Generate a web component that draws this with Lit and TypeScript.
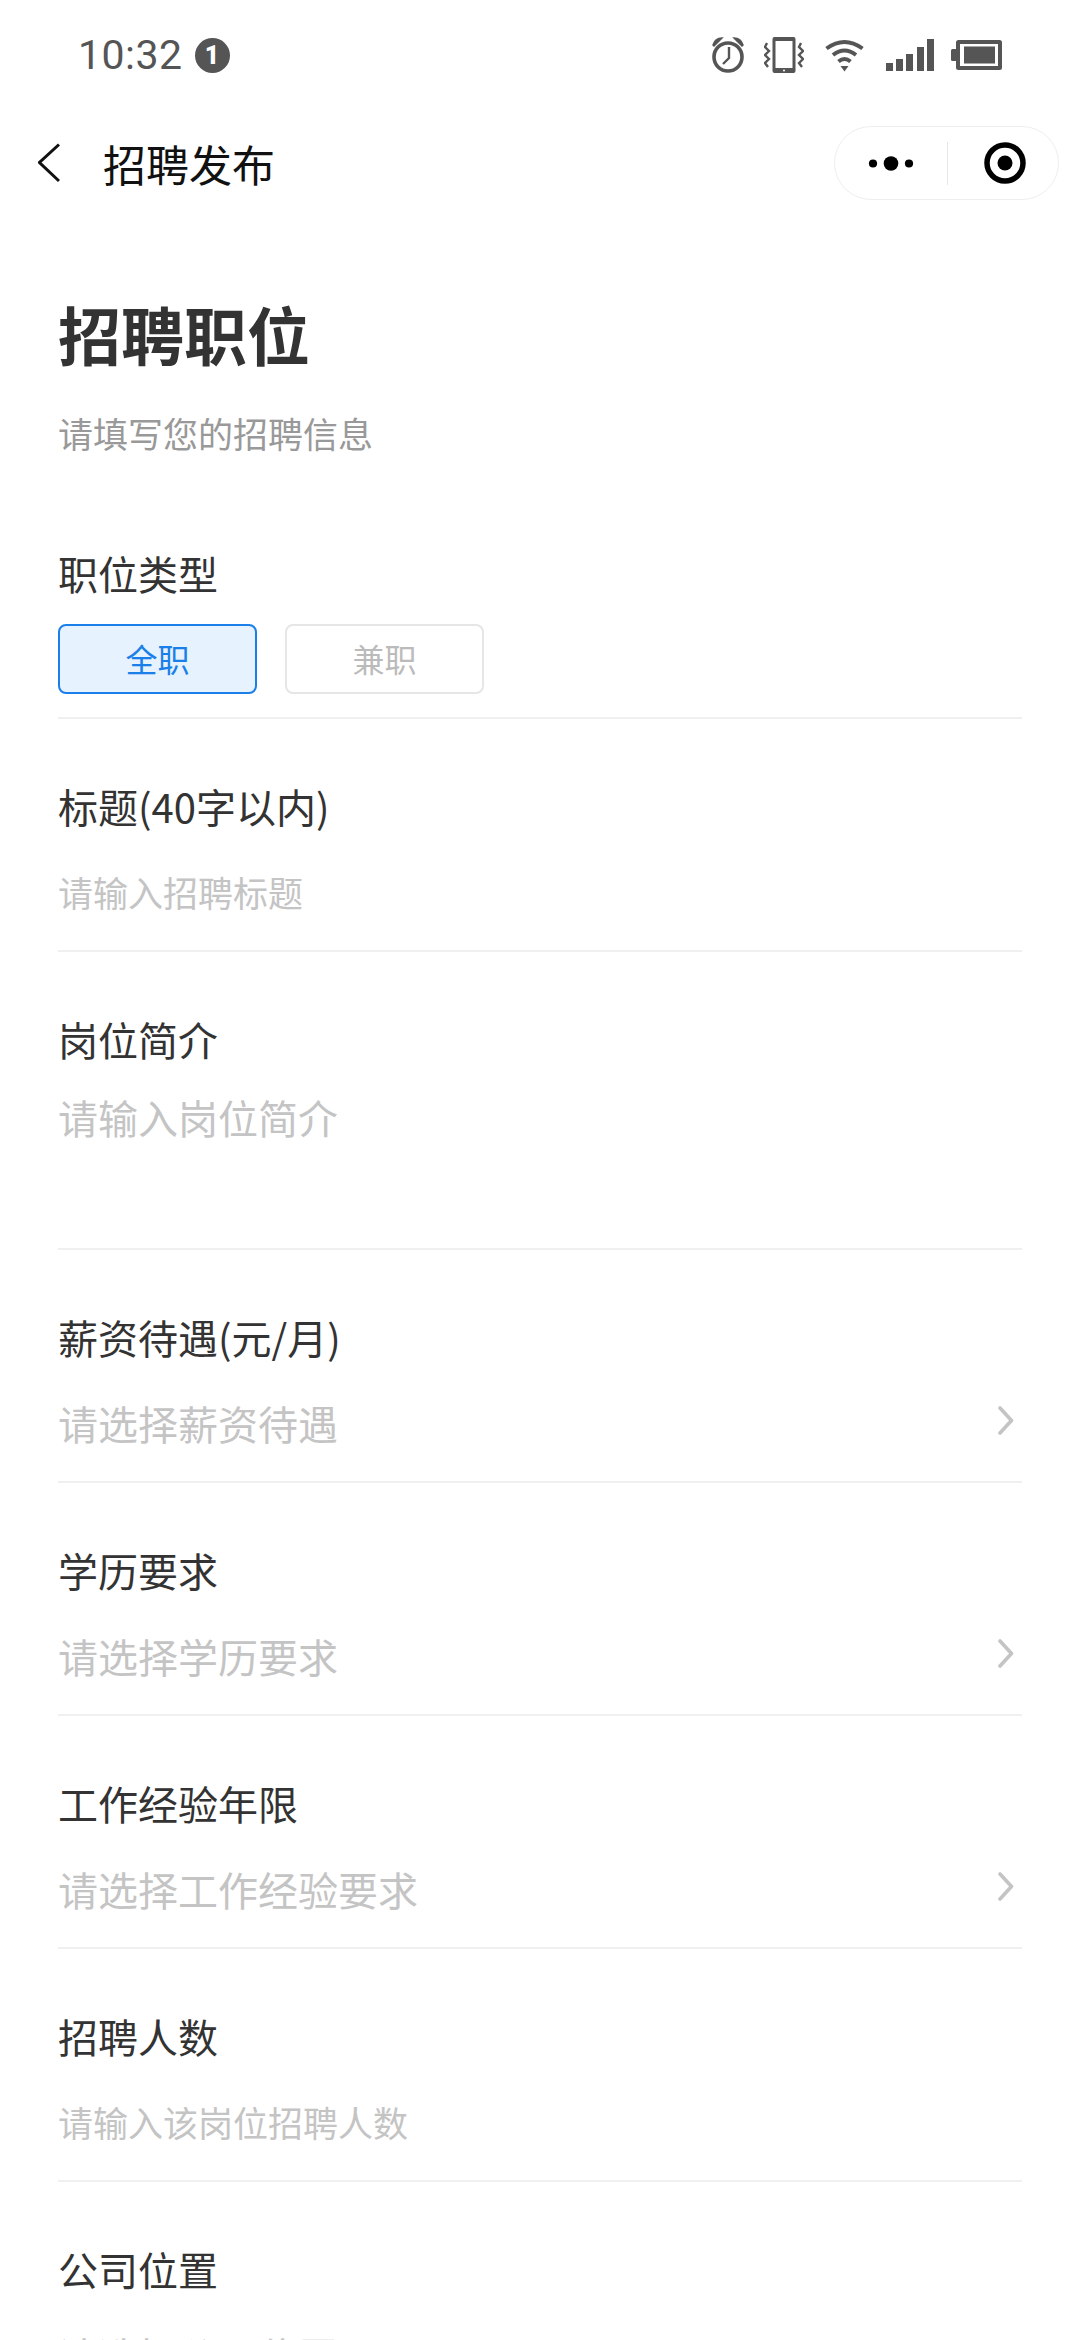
import {LitElement, html, css, svg} from 'lit';
import {customElement} from 'lit/decorators.js';

const chevron = html`<svg class="chevron" width="16" height="29" viewBox="0 0 16 29">
  <polyline points="2,2 13.5,14.5 2,27" fill="none" stroke="#c4c4c4" stroke-width="3.6" stroke-linecap="round" stroke-linejoin="round"></polyline>
</svg>`;

const alarm = svg`<g fill="none" stroke="#555">
  <circle cx="16" cy="20" r="14" stroke-width="3.6"></circle>
  <polyline points="17,10 17,21 11,27" stroke-width="2.4"></polyline>
  </g>
  <path d="M1 8 Q3 1 10 1 L2 9 Z M31 8 Q29 1 22 1 L30 9 Z" fill="#555" stroke="#555" stroke-width="1.5"></path>`;

const vibrate = svg`<rect x="8.5" y="0" width="23" height="36" rx="2" fill="#555"></rect>
  <rect x="11.5" y="4" width="17" height="27" fill="#fff"></rect>
  <circle cx="20" cy="33.4" r="1" fill="#fff"></circle>
  <g fill="none" stroke="#555" stroke-width="2.4">
    <polyline points="3,6 1,10 5,14 1,18 5,22 1,26 4,30"></polyline>
    <polyline points="37,6 35,10 39,14 35,18 39,22 35,26 38,30"></polyline>
  </g>`;

const wifi = svg`<g fill="none" stroke="#555" stroke-width="4">
    <path d="M1.5 9.5 Q19.5 -3.5 37.5 9.5"></path>
    <path d="M8 16 Q19.5 7 31 16"></path>
    <path d="M13.5 22.5 Q19.5 17.5 25.5 22.5"></path>
  </g>
  <path d="M15.5 27 L23.5 27 L19.5 32.5 Z" fill="#555"></path>`;

const signal = svg`<g fill="#555">
  <rect x="0" y="24" width="7" height="8"></rect>
  <rect x="10" y="20" width="7" height="12"></rect>
  <rect x="20" y="15" width="7" height="17"></rect>
  <rect x="31" y="8" width="7" height="24"></rect>
  <rect x="41" y="0" width="7" height="32"></rect>
</g>`;

const battery = svg`<rect x="0" y="9" width="6" height="12" rx="1.5" fill="#555"></rect>
  <rect x="5" y="0" width="46" height="30" rx="2.5" fill="#555"></rect>
  <rect x="9" y="4" width="38" height="22" fill="#fff"></rect>
  <rect x="13" y="6.5" width="31" height="17" fill="#555"></rect>`;

interface Field {
  label: string;
  hint: string;
  small?: boolean;
  picker?: boolean;
  area?: boolean;
}

const fields: Field[] = [
  {label: '标题(40字以内)', hint: '请输入招聘标题', small: true},
  {label: '岗位简介', hint: '请输入岗位简介', area: true},
  {label: '薪资待遇(元/月)', hint: '请选择薪资待遇', picker: true},
  {label: '学历要求', hint: '请选择学历要求', picker: true},
  {label: '工作经验年限', hint: '请选择工作经验要求', picker: true},
  {label: '招聘人数', hint: '请输入该岗位招聘人数', small: true},
  {label: '公司位置', hint: '请选择公司位置'},
];

@customElement('app-root')
export class AppRoot extends LitElement {
  static styles = css`
    :host {
      display: block;
      width: 1080px;
      height: 2340px;
      overflow: hidden;
      background: #fff;
      font-family: "Noto Sans CJK SC", "Noto Sans", sans-serif;
      color: #333;
    }
    .status {
      height: 110px;
      display: flex;
      align-items: center;
      padding: 0 78px;
      box-sizing: border-box;
      color: #555;
    }
    .time {
      font-family: Roboto, sans-serif;
      font-size: 41px;
      line-height: 46px;
      letter-spacing: 0.5px;
    }
    .badge {
      width: 35px;
      height: 35px;
      margin-left: 12px;
      border-radius: 50%;
      background: #555;
      color: #fff;
      font-family: Roboto, sans-serif;
      font-weight: 900;
      font-size: 25px;
      line-height: 35px;
      text-align: center;
    }
    .status-icons {
      margin-left: auto;
      display: flex;
      align-items: center;
    }
    .nav {
      height: 74px;
      margin-top: 16px;
      display: flex;
      align-items: center;
      padding: 0 21px 0 38px;
    }
    .nav-title {
      margin-left: 43px;
      font-size: 43px;
      line-height: 56px;
      color: #111;
    }
    .capsule {
      margin-left: auto;
      width: 225px;
      height: 74px;
      box-sizing: border-box;
      border: 1px solid #eee;
      border-radius: 37px;
      display: flex;
      align-items: center;
    }
    .capsule-more {
      width: 112px;
      height: 43px;
      border-right: 1px solid #e6e6e6;
      display: flex;
      align-items: center;
      justify-content: center;
    }
    .capsule-close {
      flex: 1;
      padding-left: 4px;
      display: flex;
      align-items: center;
      justify-content: center;
    }
    main {
      padding: 0 58px;
    }
    h1 {
      margin: 0;
      padding-top: 91px;
      font-size: 63px;
      line-height: 84px;
      font-weight: 700;
      color: #333;
    }
    .sub {
      margin-top: 33px;
      font-size: 35px;
      line-height: 50px;
      color: #999;
    }
    .field {
      padding: 59px 0 30px;
      border-bottom: 2px solid #f0f0f0;
    }
    .field.first {
      padding: 87px 0 23px;
    }
    .label {
      font-size: 40px;
      line-height: 56px;
      color: #333;
    }
    .value {
      margin-top: 30px;
      height: 56px;
      display: flex;
      align-items: center;
      justify-content: space-between;
      font-size: 40px;
      line-height: 56px;
      color: #c4c4c4;
    }
    .value.small {
      font-size: 35px;
    }
    .value.area {
      margin-top: 22px;
      height: 129px;
      align-items: flex-start;
    }
    .chevron {
      margin-right: 8px;
      margin-top: -5px;
    }
    .types {
      display: flex;
      gap: 28px;
      margin-top: 23px;
    }
    .type {
      width: 199px;
      height: 70px;
      box-sizing: border-box;
      border: 2px solid #e6e6e6;
      border-radius: 8px;
      text-align: center;
      font-size: 32px;
      line-height: 64px;
      color: #bbb;
    }
    .type.on {
      border-color: #1a7fe8;
      background: #e6f2fe;
      color: #1a7fe8;
    }
  `;

  renderField(f: Field) {
    const cls = 'value' + (f.small ? ' small' : '') + (f.area ? ' area' : '');
    return html`<div class="field">
      <div class="label">${f.label}</div>
      <div class=${cls}>
        <span>${f.hint}</span>
        ${f.picker ? chevron : ''}
      </div>
    </div>`;
  }

  render() {
    return html`
      <div class="status">
        <span class="time">10:32</span>
        <span class="badge">1</span>
        <div class="status-icons">
          <svg width="32" height="36" viewBox="0 0 32 36">${alarm}</svg>
          <svg width="40" height="36" viewBox="0 0 40 36" style="margin-left:20px">${vibrate}</svg>
          <svg width="39" height="33" viewBox="0 0 39 33" style="margin-left:21px">${wifi}</svg>
          <svg width="48" height="32" viewBox="0 0 48 32" style="margin-left:22px">${signal}</svg>
          <svg width="51" height="30" viewBox="0 0 51 30" style="margin-left:17px">${battery}</svg>
        </div>
      </div>
      <div class="nav">
        <svg width="22" height="40" viewBox="0 0 22 40">
          <polyline points="21,1.5 1.5,19.5 21,38" fill="none" stroke="#111" stroke-width="3"></polyline>
        </svg>
        <span class="nav-title">招聘发布</span>
        <div class="capsule">
          <div class="capsule-more">
            <svg width="46" height="15" viewBox="0 0 46 15">
              <circle cx="5" cy="7.5" r="4.1" fill="#000"></circle>
              <circle cx="23" cy="7.5" r="7.3" fill="#000"></circle>
              <circle cx="41" cy="7.5" r="4.1" fill="#000"></circle>
            </svg>
          </div>
          <div class="capsule-close">
            <svg width="42" height="42" viewBox="0 0 42 42">
              <circle cx="21" cy="21" r="18" fill="none" stroke="#000" stroke-width="5.5"></circle>
              <circle cx="21" cy="21" r="7.5" fill="#000"></circle>
            </svg>
          </div>
        </div>
      </div>
      <main>
        <h1>招聘职位</h1>
        <div class="sub">请填写您的招聘信息</div>
        <div class="field first">
          <div class="label">职位类型</div>
          <div class="types">
            <div class="type on">全职</div>
            <div class="type">兼职</div>
          </div>
        </div>
        ${fields.map((f) => this.renderField(f))}
      </main>
    `;
  }
}
